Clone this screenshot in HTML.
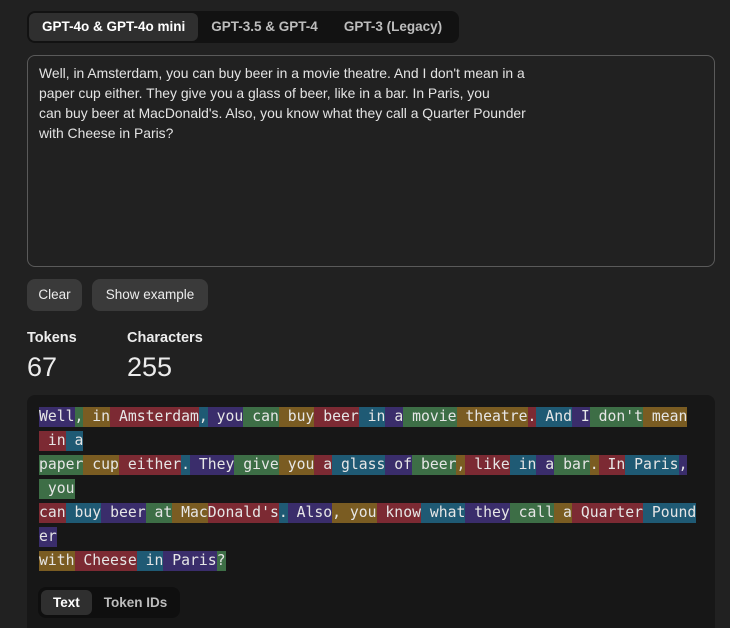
<!DOCTYPE html>
<html><head><meta charset="utf-8"><style>
*{box-sizing:border-box;margin:0;padding:0}
html,body{width:730px;height:628px;overflow:hidden}
body{background:#212121;color:#ececec;font-family:"Liberation Sans",sans-serif;position:relative}
.tabs{position:absolute;left:27px;top:11px;width:432px;height:32px;background:#121212;border-radius:8px;padding:2px;display:flex;font-size:13.5px;font-weight:bold;color:#bdbdbd;white-space:nowrap}
.tabs div{padding:0 13px;line-height:28px;border-radius:6px}
.tabs .on{background:#2f2f2f;color:#fff}
.ta{position:absolute;left:27px;top:55px;width:688px;height:212px;border:1px solid #5a5a5a;border-radius:8px;padding:7px 11px;font-size:13.9px;line-height:20px;color:#e3e3e3;white-space:nowrap}
.btn{position:absolute;top:279px;height:32px;background:#3a3a3a;border-radius:8px;font-size:13.5px;line-height:32px;text-align:center;color:#ececec}
.lbl{position:absolute;top:330px;font-size:14.5px;font-weight:bold;color:#ececec}
.num{position:absolute;top:352px;font-size:27px;color:#ececec}
.code{position:absolute;left:27px;top:395px;width:688px;height:260px;background:#171717;border-radius:8px}
.tok{position:absolute;left:39px;top:405px;font-family:"DejaVu Sans Mono",monospace;font-size:14.75px;line-height:24px;color:#e6e6e6}
.tok div{height:24px;white-space:nowrap}
.tok span{display:inline-block;height:20px;line-height:20px;vertical-align:top;margin-top:2px;white-space:pre}
.p{background:#3a2d6b}.g{background:#3d6e46}.o{background:#7a5c22}.r{background:#7c2a33}.t{background:#1f5a74}
.bt{position:absolute;left:38px;top:587px;width:142px;height:31px;background:#0f0f0f;border-radius:8px;padding:3px;display:flex;font-size:13.5px;font-weight:bold;color:#bdbdbd;white-space:nowrap}
.bt div{line-height:25px;padding:0 12px;border-radius:6px}
.bt .on{background:#2f2f2f;color:#fff}
</style></head><body>
<div class="tabs"><div class="on">GPT-4o &amp; GPT-4o mini</div><div>GPT-3.5 &amp; GPT-4</div><div>GPT-3 (Legacy)</div></div>
<div class="ta">Well, in Amsterdam, you can buy beer in a movie theatre. And I don't mean in a<br>paper cup either. They give you a glass of beer, like in a bar. In Paris, you<br>can buy beer at MacDonald's. Also, you know what they call a Quarter Pounder<br>with Cheese in Paris?</div>
<div class="btn" style="left:27px;width:55px">Clear</div>
<div class="btn" style="left:92px;width:116px">Show example</div>
<div class="lbl" style="left:27px">Tokens</div>
<div class="lbl" style="left:127px">Characters</div>
<div class="num" style="left:27px">67</div>
<div class="num" style="left:127px">255</div>
<div class="code"></div>
<div class="tok"><div><span class="p">Well</span><span class="g">,</span><span class="o"> in</span><span class="r"> Amsterdam</span><span class="t">,</span><span class="p"> you</span><span class="g"> can</span><span class="o"> buy</span><span class="r"> beer</span><span class="t"> in</span><span class="p"> a</span><span class="g"> movie</span><span class="o"> theatre</span><span class="r">.</span><span class="t"> And</span><span class="p"> I</span><span class="g"> don't</span><span class="o"> mean</span></div><div><span class="r"> in</span><span class="t"> a</span></div><div><span class="g">paper</span><span class="o"> cup</span><span class="r"> either</span><span class="t">.</span><span class="p"> They</span><span class="g"> give</span><span class="o"> you</span><span class="r"> a</span><span class="t"> glass</span><span class="p"> of</span><span class="g"> beer</span><span class="o">,</span><span class="r"> like</span><span class="t"> in</span><span class="p"> a</span><span class="g"> bar</span><span class="o">.</span><span class="r"> In</span><span class="t"> Paris</span><span class="p">,</span></div><div><span class="g"> you</span></div><div><span class="r">can</span><span class="t"> buy</span><span class="p"> beer</span><span class="g"> at</span><span class="o"> Mac</span><span class="r">Donald's</span><span class="t">.</span><span class="p"> Also</span><span class="o">,</span><span class="o"> you</span><span class="r"> know</span><span class="t"> what</span><span class="p"> they</span><span class="g"> call</span><span class="o"> a</span><span class="r"> Quarter</span><span class="t"> Pound</span></div><div><span class="p">er</span></div><div><span class="o">with</span><span class="r"> Cheese</span><span class="t"> in</span><span class="p"> Paris</span><span class="g">?</span></div></div>
<div class="bt"><div class="on">Text</div><div>Token IDs</div></div>
</body></html>
